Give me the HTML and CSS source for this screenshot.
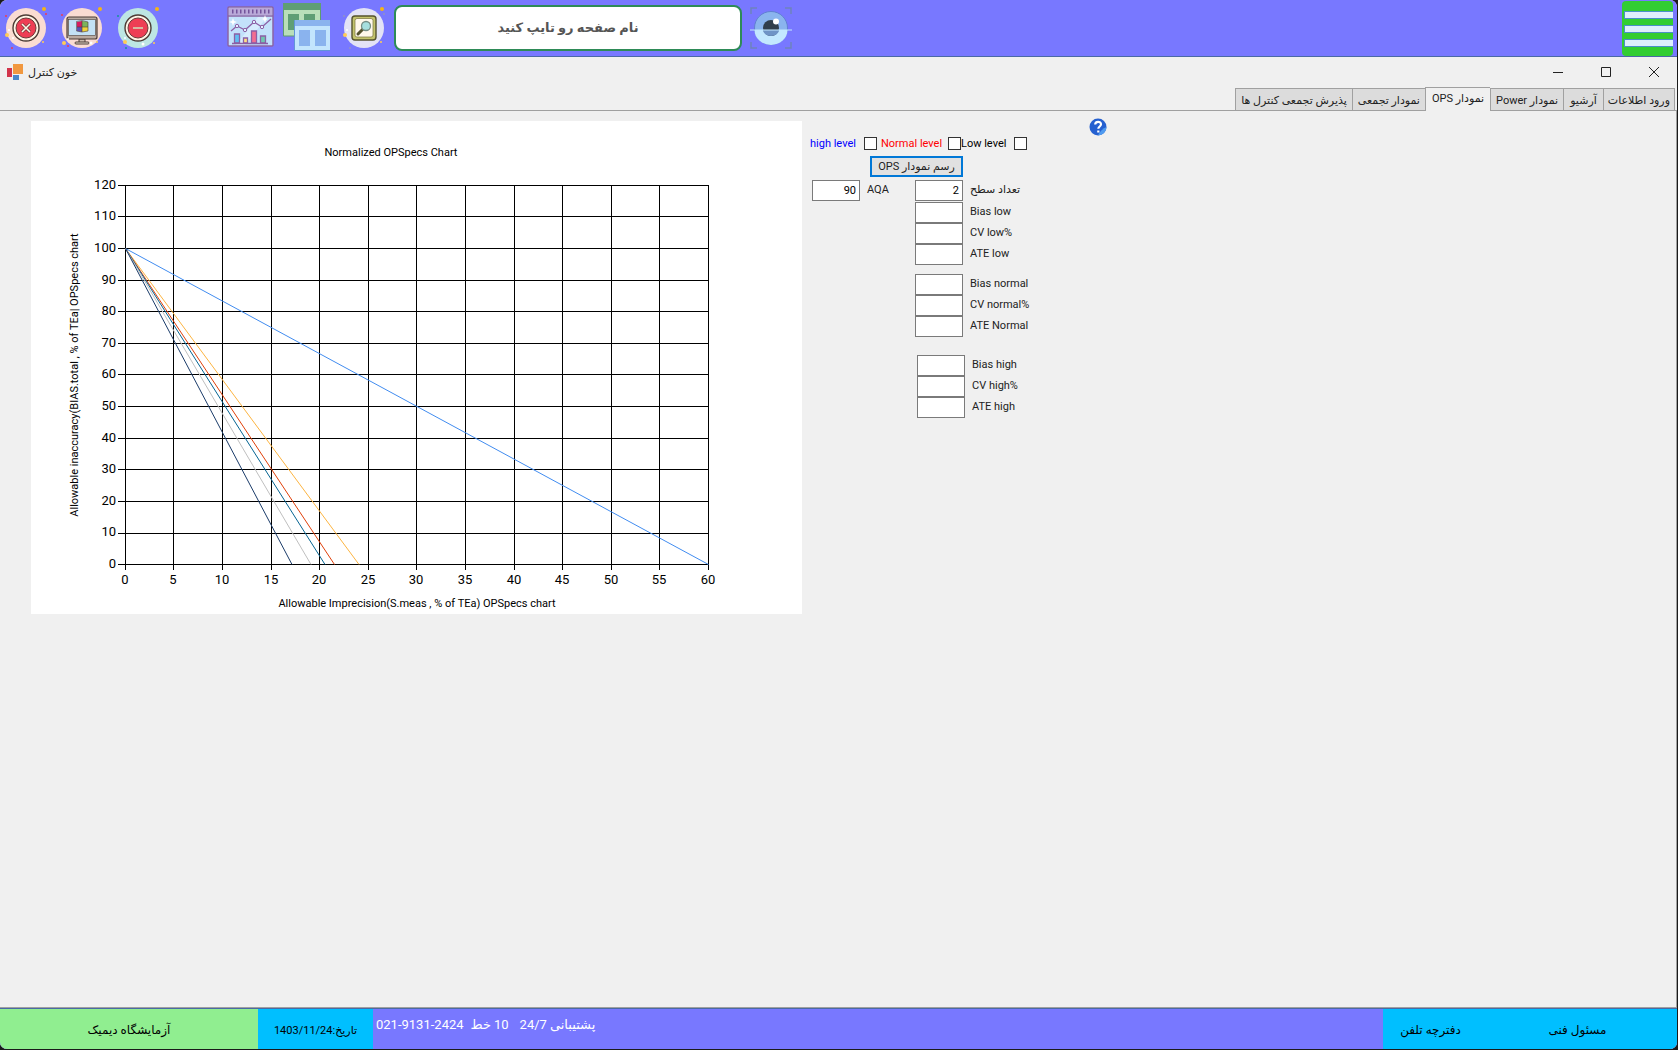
FILE: index.html
```html
<!DOCTYPE html>
<html lang="fa">
<head>
    <meta charset="UTF-8">
    <meta name="viewport" content="width=device-width, initial-scale=1.0">
    <title>خون کنترل</title>
    <link rel="stylesheet" href="styles.css">
</head>
<body>
    <div class="window">
        <header class="topbar">
            <div class="window-actions">
                <button class="icon-btn" aria-label="بستن">
                    <svg width="44" height="44" viewBox="0 0 44 44">
                        <circle cx="22" cy="22" r="20" fill="#fadcd2"/>
                        <circle cx="22" cy="22" r="13" fill="#fff5e6" stroke="#4d3d36" stroke-width="1.4"/>
                        <circle cx="22" cy="22" r="10" fill="#ee3e54" stroke="#6b3a38"/>
                        <path d="M18 18l8 8M26 18l-8 8" stroke="#6b3a38" stroke-width="3"/>
                        <path d="M18 18l8 8M26 18l-8 8" stroke="#fff5e6" stroke-width="1.6"/>
                        <circle cx="40" cy="3" r="2" fill="#f5b515"/><circle cx="3" cy="29" r="2" fill="#ffcc55"/>
                        <circle cx="39" cy="36" r="1" fill="#ffcc55"/><circle cx="42" cy="8" r="1" fill="#ee3e54"/>
                        <circle cx="2" cy="10" r="1" fill="#ee3e54"/><circle cx="8" cy="42" r="1" fill="#ee3e54"/>
                        <circle cx="5" cy="24" r="1" fill="#fff"/><circle cx="9" cy="32" r="1" fill="#fff"/>
                    </svg>
                </button>
                <button class="icon-btn" aria-label="دسکتاپ">
                    <svg width="44" height="44" viewBox="0 0 44 44">
                        <circle cx="22" cy="22" r="20" fill="#fadcd2"/>
                        <path d="M19 33h6v4h-6z" fill="#c9b9ac" stroke="#4d3d36"/>
                        <rect x="15" y="36" width="14" height="2" rx="1" fill="#e8dccb" stroke="#4d3d36"/>
                        <rect x="7" y="11" width="30" height="22" rx="2" fill="#b9aaa0" stroke="#4d3d36" stroke-width="1.2"/>
                        <rect x="8.500" y="13.500" width="27" height="16" fill="#c3e1f5" stroke="#4d3d36" stroke-width=".6"/>
                        <path d="M17 16l5-1v6h-5z" fill="#d81b60"/><path d="M22 15l6 1v5h-6z" fill="#7cb35c"/>
                        <path d="M17 21h5v5l-5-1z" fill="#5b55b5"/><path d="M22 21h6v4l-6 1z" fill="#f0d33c"/>
                        <path d="M16.500 15.500l5.500-1 6 1.500v9l-6 1-5.500-1zM22 15v11M17 21h11" fill="none" stroke="#4d3d36" stroke-width=".6"/>
                        <circle cx="40" cy="3" r="2" fill="#f5b515"/><circle cx="4" cy="37" r="2" fill="#ffcc55"/>
                        <circle cx="37" cy="36" r="1" fill="#ffcc55"/><circle cx="2" cy="9" r="1" fill="#ee3e54"/>
                        <circle cx="8" cy="40" r="1" fill="#ee3e54"/><circle cx="31" cy="37" r="1.500" fill="#fff"/>
                        <circle cx="8" cy="33" r="1" fill="#fff"/>
                    </svg>
                </button>
                <button class="icon-btn" aria-label="کوچک کردن">
                    <svg width="44" height="44" viewBox="0 0 44 44">
                        <circle cx="22" cy="22" r="20" fill="#bde6e3"/>
                        <circle cx="22" cy="22" r="13" fill="#fff5e6" stroke="#4d3d36" stroke-width="1.4"/>
                        <circle cx="22" cy="22" r="10" fill="#ee3e54" stroke="#6b3a38"/>
                        <path d="M17 22h10" stroke="#d8b6a0" stroke-width="2"/>
                        <circle cx="41" cy="3" r="2" fill="#f5b515"/><circle cx="9" cy="36" r="2" fill="#ffcc55"/>
                        <circle cx="38" cy="37" r="1" fill="#ffcc55"/><circle cx="2" cy="10" r="1" fill="#16939b"/>
                        <circle cx="10" cy="42" r="1" fill="#16939b"/><circle cx="27" cy="38" r="1.500" fill="#fff"/>
                        <circle cx="9" cy="32" r="1" fill="#fff"/>
                    </svg>
                </button>
            </div>
            <div class="tools">
                <button class="icon-btn" aria-label="نمودار">
                    <svg width="48" height="44" viewBox="0 0 48 44">
                        <rect x="1" y="1" width="45" height="39" rx="1" fill="#c3e1fb" stroke="#8c64a4" stroke-width="1.500"/>
                        <path d="M2 2h43v7H2z" fill="#b9a8d8"/>
                        <path d="M5 5.500h38" stroke="#73539b" stroke-width="4" stroke-dasharray="1.500 2.500"/>
                        <path d="M1 10h45" stroke="#8c64a4" stroke-width="1.500"/>
                        <path d="M31 11l-22 28h9L40 11z" fill="#e0f1ff" opacity=".7"/>
                        <path d="M4 25l6-5 8 4 9-8 8 5 9-8" fill="none" stroke="#8c5fa5" stroke-width="1.300"/>
                        <g fill="#e0f1ff" stroke="#8c5fa5"><circle cx="10" cy="20" r="1.700"/><circle cx="18" cy="24" r="1.700"/><circle cx="27" cy="16" r="1.700"/><circle cx="35" cy="21" r="1.700"/></g>
                        <g stroke="#8c5fa5" stroke-width="1.300">
                            <path d="M7.500 28h5v9h-5z" fill="#60bdf2"/><path d="M16.500 32h4v5h-4z" fill="#ffdf83"/>
                            <path d="M24.500 25h5v12h-5z" fill="#f36d91"/><path d="M33.500 30h5v7h-5z" fill="#70c7b0"/>
                            <path d="M5 37.500h36"/>
                        </g>
                        <path d="M6 12l1 3 3 1-3 1-1 3-1-3-3-1 3-1zM38 9l1 3 2 1-2 1-1 3-1-3-2-1 2-1z" fill="#fff"/>
                    </svg>
                </button>
                <button class="icon-btn" aria-label="پنجره ها">
                    <svg width="47" height="50" viewBox="0 0 47 50">
                        <path d="M.5 1h37v32H.5z" fill="#b9dfb9" stroke="#5c9b72"/>
                        <path d="M0 0h38v7H0z" fill="#5f9e75"/>
                        <path d="M5 11h11v16H5zM21 11h11v16H21z" fill="#5f9e75"/>
                        <path d="M11.500 17.500h38v30h-38z" fill="#c3e5fd" stroke="#6295d8"/>
                        <path d="M12 17h36v6H12z" fill="#8ab3ee"/>
                        <path d="M16 27h11v16H16zM32 27h11v16H32z" fill="#8ab3ee"/>
                    </svg>
                </button>
                <button class="icon-btn icon-search" aria-label="جستجو">
                    <svg width="44" height="44" viewBox="0 0 44 44">
                        <circle cx="22" cy="22" r="20" fill="#e3e3f6"/>
                        <rect x="10" y="10" width="24" height="24" rx="3" fill="#c3c36d" stroke="#55532e" stroke-width="1.400"/>
                        <rect x="13" y="12.500" width="18" height="18.500" rx="2" fill="#fff8ec" stroke="#77733c" stroke-width=".7"/>
                        <path d="M21 23l-5 5" stroke="#55532e" stroke-width="3" stroke-linecap="round"/>
                        <circle cx="24" cy="20" r="4.500" fill="#a6dfdf" stroke="#758d86" stroke-width="1.300"/>
                        <circle cx="40" cy="3" r="2" fill="#f5b515"/><circle cx="3" cy="29" r="2" fill="#ffcc55"/>
                        <circle cx="39" cy="36" r="1" fill="#ffcc55"/><circle cx="42" cy="8" r="1" fill="#9292c4"/>
                        <circle cx="2" cy="10" r="1" fill="#9292c4"/><circle cx="8" cy="42" r="1" fill="#9292c4"/>
                        <circle cx="5" cy="24" r="1" fill="#fff"/>
                    </svg>
                </button>
            </div>
            <input class="page-search" type="text" dir="rtl" placeholder="نام صفحه رو تایپ کنید" aria-label="نام صفحه">
            <button class="icon-btn icon-eye" aria-label="نمایش">
                <svg width="42" height="42" viewBox="0 0 42 42">
                    <path d="M1 7V1h6M35 1h6v6M1 35v6h6M35 41h6v-6" fill="none" stroke="#6d82bd" stroke-width="1.500"/>
                    <circle cx="21" cy="21" r="16.500" fill="#8ab4ee" stroke="#587bc8" stroke-width=".8"/>
                    <path d="M4.500 23a16.500 15 0 0 0 33 0z" fill="#c3e8ff"/>
                    <circle cx="21" cy="21" r="8" fill="#303e4c"/>
                    <path d="M13 23a8 6 0 0 0 16 0z" fill="#6f94c6"/>
                    <circle cx="26" cy="14.500" r="3" fill="#fff"/>
                    <path d="M0 23h42" stroke="#c3e8ff"/>
                </svg>
            </button>
            <button class="menu-btn" aria-label="منو">
                <span class="menu-line"></span>
                <span class="menu-line"></span>
                <span class="menu-line"></span>
            </button>
        </header>

        <div class="titlebar">
            <svg class="app-icon" width="17" height="17" viewBox="0 0 17 17">
                <path d="M0 4h5v9H0z" fill="#d2344b"/><path d="M6 0h10v10H6z" fill="#f19840"/><path d="M6 11h6v5H6z" fill="#4a87c9"/>
            </svg>
            <h1 class="title" dir="rtl">خون کنترل</h1>
            <div class="controls">
                <button class="control" aria-label="کوچک کردن پنجره"><svg width="12" height="12"><path d="M1 6.500h10" stroke="#222"/></svg></button>
                <button class="control" aria-label="بزرگ کردن پنجره"><svg width="12" height="12"><path d="M1.500 1.500h9v9h-9z" fill="none" stroke="#222"/></svg></button>
                <button class="control" aria-label="بستن پنجره"><svg width="12" height="12"><path d="M1 1l10 10M11 1L1 11" stroke="#222"/></svg></button>
            </div>
        </div>

        <nav class="tabs" dir="rtl">
            <button class="tab">ورود اطلاعات</button>
            <button class="tab">آرشیو</button>
            <button class="tab">نمودار Power</button>
            <button class="tab active">نمودار OPS</button>
            <button class="tab">نمودار تجمعی</button>
            <button class="tab">پذیرش تجمعی کنترل ها</button>
        </nav>

        <main class="content">
            <svg class="chart" width="771" height="493" viewBox="0 0 771 493">
                <text class="chart-title" x="360" y="35">Normalized OPSpecs Chart</text>
                <path class="grid-lines" d="M87 64.500H678M87 95.500H678M87 127.500H678M87 159.500H678M87 190.500H678M87 222.500H678M87 253.500H678M87 285.500H678M87 317.500H678M87 348.500H678M87 380.500H678M87 412.500H678M87 443.500H678
                    M94.500 64V449M142.500 64V449M191.500 64V449M240.500 64V449M288.500 64V449M337.500 64V449M385.500 64V449M434.500 64V449M483.500 64V449M531.500 64V449M580.500 64V449M628.500 64V449M677.500 64V449"/>
                <g class="series">
                    <path d="M94.500 127.500L677.500 443.500" stroke="#418cf0"/>
                    <path d="M94.500 127.500L328 443.500" stroke="#fcb441"/>
                    <path d="M94.500 127.500L303.500 443.500" stroke="#e0400a"/>
                    <path d="M94.500 127.500L294 443.500" stroke="#056492"/>
                    <path d="M94.500 127.500L280 443.500" stroke="#bfbfbf"/>
                    <path d="M94.500 127.500L261 443.500" stroke="#1a3b69"/>
                </g>
                <g class="y-labels">
                    <text x="85" y="68">120</text><text x="85" y="99">110</text><text x="85" y="131">100</text>
                    <text x="85" y="163">90</text><text x="85" y="194">80</text><text x="85" y="226">70</text>
                    <text x="85" y="257">60</text><text x="85" y="289">50</text><text x="85" y="321">40</text>
                    <text x="85" y="352">30</text><text x="85" y="384">20</text><text x="85" y="415">10</text>
                    <text x="85" y="447">0</text>
                </g>
                <g class="x-labels">
                    <text x="94" y="463">0</text><text x="142" y="463">5</text><text x="191" y="463">10</text>
                    <text x="240" y="463">15</text><text x="288" y="463">20</text><text x="337" y="463">25</text>
                    <text x="385" y="463">30</text><text x="434" y="463">35</text><text x="483" y="463">40</text>
                    <text x="531" y="463">45</text><text x="580" y="463">50</text><text x="628" y="463">55</text>
                    <text x="677" y="463">60</text>
                </g>
                <text class="axis-title" x="386" y="486">Allowable Imprecision(S.meas , % of TEa) OPSpecs chart</text>
                <text class="axis-title" transform="translate(47 254) rotate(-90)">Allowable inaccuracy(BIAS.total , % of TEa| OPSpecs chart</text>
            </svg>

            <form class="ops-form" onsubmit="event.preventDefault()">
                <div class="levels">
                    <label class="level high" for="highLevel">high level</label>
                    <input class="check" type="checkbox" id="highLevel">
                    <label class="level normal" for="normalLevel">Normal level</label>
                    <input class="check" type="checkbox" id="normalLevel">
                    <label class="level low" for="lowLevel">Low level</label>
                    <input class="check" type="checkbox" id="lowLevel">
                </div>
                <button class="draw-btn" type="submit" dir="rtl">رسم نمودار OPS</button>
                <div class="field count-row">
                    <input type="text" id="aqa" value="90">
                    <label class="aqa-label" for="aqa">AQA</label>
                    <input type="text" id="levelCount" value="2">
                    <label for="levelCount" dir="rtl">تعداد سطح</label>
                </div>
                <div class="group">
                    <div class="field"><input type="text" id="biasLow"><label for="biasLow">Bias low</label></div>
                    <div class="field"><input type="text" id="cvLow"><label for="cvLow">CV low%</label></div>
                    <div class="field"><input type="text" id="ateLow"><label for="ateLow">ATE low</label></div>
                </div>
                <div class="group group-normal">
                    <div class="field"><input type="text" id="biasNormal"><label for="biasNormal">Bias normal</label></div>
                    <div class="field"><input type="text" id="cvNormal"><label for="cvNormal">CV normal%</label></div>
                    <div class="field"><input type="text" id="ateNormal"><label for="ateNormal">ATE Normal</label></div>
                </div>
                <div class="group group-high">
                    <div class="field"><input type="text" id="biasHigh"><label for="biasHigh">Bias high</label></div>
                    <div class="field"><input type="text" id="cvHigh"><label for="cvHigh">CV high%</label></div>
                    <div class="field"><input type="text" id="ateHigh"><label for="ateHigh">ATE high</label></div>
                </div>
            </form>

            <button class="help" aria-label="راهنما">
                <svg width="18" height="18" viewBox="0 0 18 18">
                    <circle cx="9" cy="9" r="8.500" fill="#2560d0"/>
                    <path d="M9 17.500A8.500 8.500 0 0 0 17.500 9Q12 11 9 17.500" fill="#4f9bf0"/>
                    <path d="M6.200 6.600C6.200 3 12 3 12 6.300c0 2.200-2.700 2.200-2.700 4.500M9.300 12.500v2" fill="none" stroke="#fff" stroke-width="2.200"/>
                </svg>
            </button>
        </main>

        <footer class="statusbar">
            <div class="lab" dir="rtl">آزمایشگاه دیمیک</div>
            <div class="date"><span>1403/11/24</span><span>:</span><span dir="rtl">تاریخ</span></div>
            <div class="support">
                <span>021-9131-2424</span>
                <span class="lines"><span>خط</span><span>10</span></span>
                <span class="lines hours"><span>24/7</span><span>پشتیبانی</span></span>
            </div>
            <div class="staff">
                <button class="staff-btn" dir="rtl">دفترچه تلفن</button>
                <button class="staff-btn" dir="rtl">مسئول فنی</button>
            </div>
        </footer>
    </div>
</body>
</html>
```
FILE: styles.css
```css
* {
    box-sizing: border-box;
}

body {
    margin: 0;
    padding: 0 1px 1px 0;
    min-height: 100vh;
    display: flex;
    background-color: #1a1a1a;
    font-family: Roboto, "DejaVu Sans", sans-serif;
    font-size: 11px;
    color: #222;
}

button, input {
    font-family: inherit;
    font-size: inherit;
    color: inherit;
    margin: 0;
}

button {
    border: none;
    background: none;
    padding: 0;
    cursor: pointer;
}

svg {
    display: block;
}

.window {
    flex: 1;
    display: flex;
    flex-direction: column;
    background-color: #f0f0f0;
    border-radius: 7px;
    overflow: hidden;
}

/* Top bar */
.topbar {
    display: flex;
    align-items: center;
    height: 57px;
    padding: 0 4px;
    background-color: #7878ff;
    border-bottom: 1px solid #4a69a5;
}

.window-actions {
    display: flex;
    gap: 12px;
}

.tools {
    display: flex;
    align-items: center;
    gap: 8px;
    margin-left: 67px;
}

.icon-search {
    margin-left: 4px;
}

.page-search {
    width: 348px;
    height: 46px;
    margin-left: 8px;
    padding-bottom: 2px;
    border: 2px solid #2e8b57;
    border-radius: 8px;
    background-color: #fff;
    text-align: center;
    font-size: 13px;
    font-weight: bold;
}

.page-search::placeholder {
    color: #555;
    opacity: 1;
}

.icon-eye {
    margin-left: 8px;
}

.menu-btn {
    display: flex;
    flex-direction: column;
    justify-content: center;
    gap: 6px;
    width: 51px;
    height: 55px;
    margin-left: auto;
    padding: 1px 0 0 2px;
    border-radius: 4px;
    background-color: #32cd32;
}

.menu-line {
    height: 8px;
    border: 1px solid #4a90c8;
    border-right: none;
    background-color: #deeffd;
}

/* Title bar and tabs */
.titlebar {
    display: flex;
    align-items: center;
    height: 30px;
    padding-left: 7px;
}

.title {
    margin: 0 0 0 4px;
    font-size: 11px;
    font-weight: normal;
}

.controls {
    display: flex;
    margin-left: auto;
    margin-right: -1px;
}

.control {
    display: flex;
    align-items: center;
    justify-content: center;
    width: 48px;
    height: 30px;
}

.tabs {
    display: flex;
    align-items: flex-end;
    height: 24px;
    padding-right: 2px;
    border-bottom: 1px solid #a0a0a0;
}

.tab {
    height: 22px;
    padding: 1px 5px 0;
    border: 1px solid #a0a0a0;
    border-right-width: 0;
    border-bottom: none;
    background-color: #dcdcdc;
    white-space: nowrap;
}

.tab:first-child {
    padding: 1px 4px 0;
    border-right-width: 1px;
}

.tab:nth-child(2) {
    padding: 1px 6px 0;
}

.tab.active {
    height: 24px;
    margin-bottom: -1px;
    padding: 0 6px 2px;
    background-color: #f0f0f0;
}

/* Content */
.content {
    flex: 1;
    display: flex;
    align-items: flex-start;
    padding: 7px 0 0 31px;
    border-right: 1px solid #a0a0a0;
}

.chart {
    flex: none;
    margin-top: 3px;
    background-color: #fff;
    font-size: 13px;
    fill: #000;
}

.chart-title, .axis-title {
    font-size: 11px;
    text-anchor: middle;
}

.grid-lines {
    stroke: #000;
    shape-rendering: crispEdges;
}

.series {
    fill: none;
    stroke-width: 1;
}

.y-labels {
    text-anchor: end;
}

.x-labels {
    text-anchor: middle;
}

.ops-form {
    width: 279px;
    padding: 16px 0 0 8px;
}

.levels {
    display: flex;
    align-items: center;
    height: 18px;
}

.level {
    white-space: nowrap;
}

.high {
    width: 54px;
    color: #0000ff;
}

.normal {
    width: 71px;
    padding-left: 4px;
    color: #ff0000;
}

.low {
    width: 53px;
    color: #000;
}

.check {
    appearance: none;
    width: 13px;
    height: 13px;
    border: 1px solid #333;
    background-color: #fff;
}

.check:checked {
    background-color: #0078d7;
}

.draw-btn {
    display: block;
    width: 93px;
    height: 21px;
    margin: 4px 0 3px 60px;
    border: 2px solid #0078d7;
    background-color: #e1e1e1;
    white-space: nowrap;
}

.field {
    display: flex;
    align-items: center;
    gap: 7px;
    height: 21px;
}

.field label {
    padding-bottom: 2px;
}

.field input {
    width: 48px;
    height: 21px;
    padding: 0 3px 1px;
    border: 1px solid #7a7a7a;
    background-color: #fff;
    color: #000;
    text-align: right;
}

.count-row {
    margin: 0 0 1px 2px;
}

.aqa-label {
    width: 41px;
}

.group {
    margin-left: 105px;
}

.group-normal {
    margin-top: 9px;
}

.group-high {
    margin-top: 18px;
    margin-left: 107px;
}

.help {
    margin-left: 8px;
}

/* Status bar */
.statusbar {
    display: flex;
    height: 42px;
    border-top: 1px solid #a0a0a0;
    background-color: #7878ff;
    box-shadow: inset 0 1px #4a69a5;
    padding-top: 1px;
    font-size: 12px;
}

.lab, .date {
    display: flex;
    align-items: center;
    justify-content: center;
    padding-top: 2px;
    color: #000;
}

.lab {
    width: 258px;
    background-color: #90ee90;
}

.date {
    width: 115px;
    background-color: #00bfff;
    font-size: 11px;
}

.support {
    flex: 1;
    display: flex;
    gap: 7px;
    padding: 8px 3px;
    color: #fff;
    font-size: 13px;
}

.lines {
    display: flex;
    gap: 3px;
}

.hours {
    margin-left: 4px;
}

.staff {
    display: flex;
    width: 294px;
    padding-top: 2px;
    background-color: #00bfff;
    color: #000;
}

.staff-btn:first-child {
    width: 95px;
}

.staff-btn:last-child {
    flex: 1;
}
```
